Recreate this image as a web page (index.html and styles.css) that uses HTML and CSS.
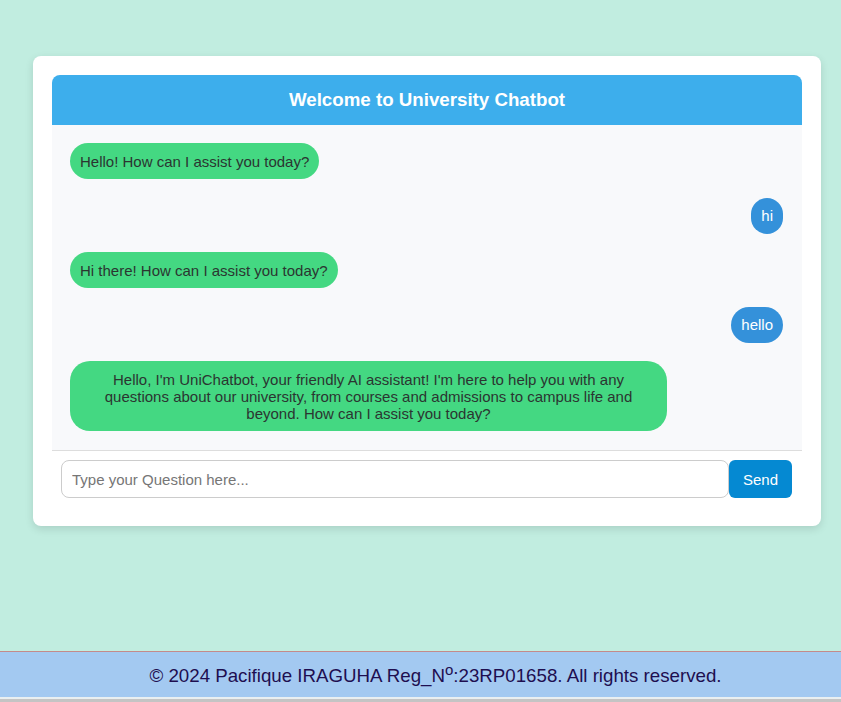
FILE: index.html
```html
<!DOCTYPE html>
<html lang="en">
<head>
<meta charset="utf-8">
<title>University Chatbot</title>
<link rel="stylesheet" href="styles.css">
</head>
<body>
<main class="page">
  <section class="card">
    <header class="chat-header"><h3 class="chat-title">Welcome to University Chatbot</h3></header>
    <div class="chat-log">
      <div class="msg bot">Hello! How can I assist you today?</div>
      <div class="msg user">hi</div>
      <div class="msg bot">Hi there! How can I assist you today?</div>
      <div class="msg user">hello</div>
      <div class="msg bot long">Hello, I'm UniChatbot, your friendly AI assistant! I'm here to help you with any questions about our university, from courses and admissions to campus life and beyond. How can I assist you today?</div>
    </div>
    <form class="input-row">
      <input class="question" type="text" placeholder="Type your Question here...">
      <button class="send" type="button">Send</button>
    </form>
  </section>
</main>
<footer class="footer">
  <p class="footer-text">© 2024 Pacifique IRAGUHA Reg_N<sup class="sup">o</sup>:23RP01658. All rights reserved.</p>
</footer>
</body>
</html>
```

FILE: styles.css
```css
html, body {
  margin: 0;
  padding: 0;
}
body {
  background: #c1ede0;
  font-family: "Liberation Sans", Arial, sans-serif;
  height: 702px;
  display: flex;
  flex-direction: column;
}
.page {
  flex: 1;
  padding: 56px 0 0 33px;
}
.card {
  width: 788px;
  box-sizing: border-box;
  background: #fff;
  border-radius: 8px;
  padding: 19px;
  box-shadow: 0 3px 8px rgba(0, 0, 0, 0.12);
}
.chat-header {
  background: #3daeec;
  border-radius: 8px 8px 0 0;
  height: 50px;
  display: flex;
  align-items: center;
  justify-content: center;
}
.chat-title {
  margin: 0;
  color: #fff;
  font-size: 18.72px;
  font-weight: bold;
}
.chat-log {
  background: #f8f9fb;
  padding: 18px 19px 19px 18px;
  display: flex;
  flex-direction: column;
  gap: 18.5px;
  border-bottom: 1px solid #dddddd;
}
.msg {
  font-size: 15px;
  line-height: 17px;
  padding: 9.5px 10px;
  border-radius: 20px;
  max-width: 597px;
  box-sizing: border-box;
}
.bot {
  align-self: flex-start;
  background: #44d882;
  color: #2b3531;
}
.user {
  align-self: flex-end;
  background: #3491da;
  color: #fff;
}
.long {
  text-align: center;
}
.input-row {
  display: flex;
  margin: 0;
  padding: 9px 10px 9px 9px;
}
.question {
  flex: 1;
  height: 38px;
  box-sizing: border-box;
  border: 1px solid #cccccc;
  border-radius: 8px;
  padding: 0 10px;
  font-family: "Liberation Sans", Arial, sans-serif;
  font-size: 15px;
  color: #333;
  outline: none;
}
.question::placeholder {
  color: #767676;
}
.send {
  height: 38px;
  padding: 0 14px;
  border: none;
  border-radius: 6px;
  background: #0589d2;
  color: #fff;
  font-family: "Liberation Sans", Arial, sans-serif;
  font-size: 15px;
}
.footer {
  background: #a3c9f1;
  border-top: 1px solid #c48a8a;
  border-bottom: 2px solid #e9eff1;
  height: 45px;
  display: flex;
  align-items: center;
  justify-content: center;
  box-shadow: 0 3px 0 #c4c4c4;
  margin-bottom: 3px;
}
.footer-text {
  margin: 0;
  padding: 3px 0 0 30px;
  font-size: 18.72px;
  line-height: 22px;
  color: #1e0e50;
}
.sup {
  font-size: 15px;
  vertical-align: 7px;
  line-height: 0;
}
```
